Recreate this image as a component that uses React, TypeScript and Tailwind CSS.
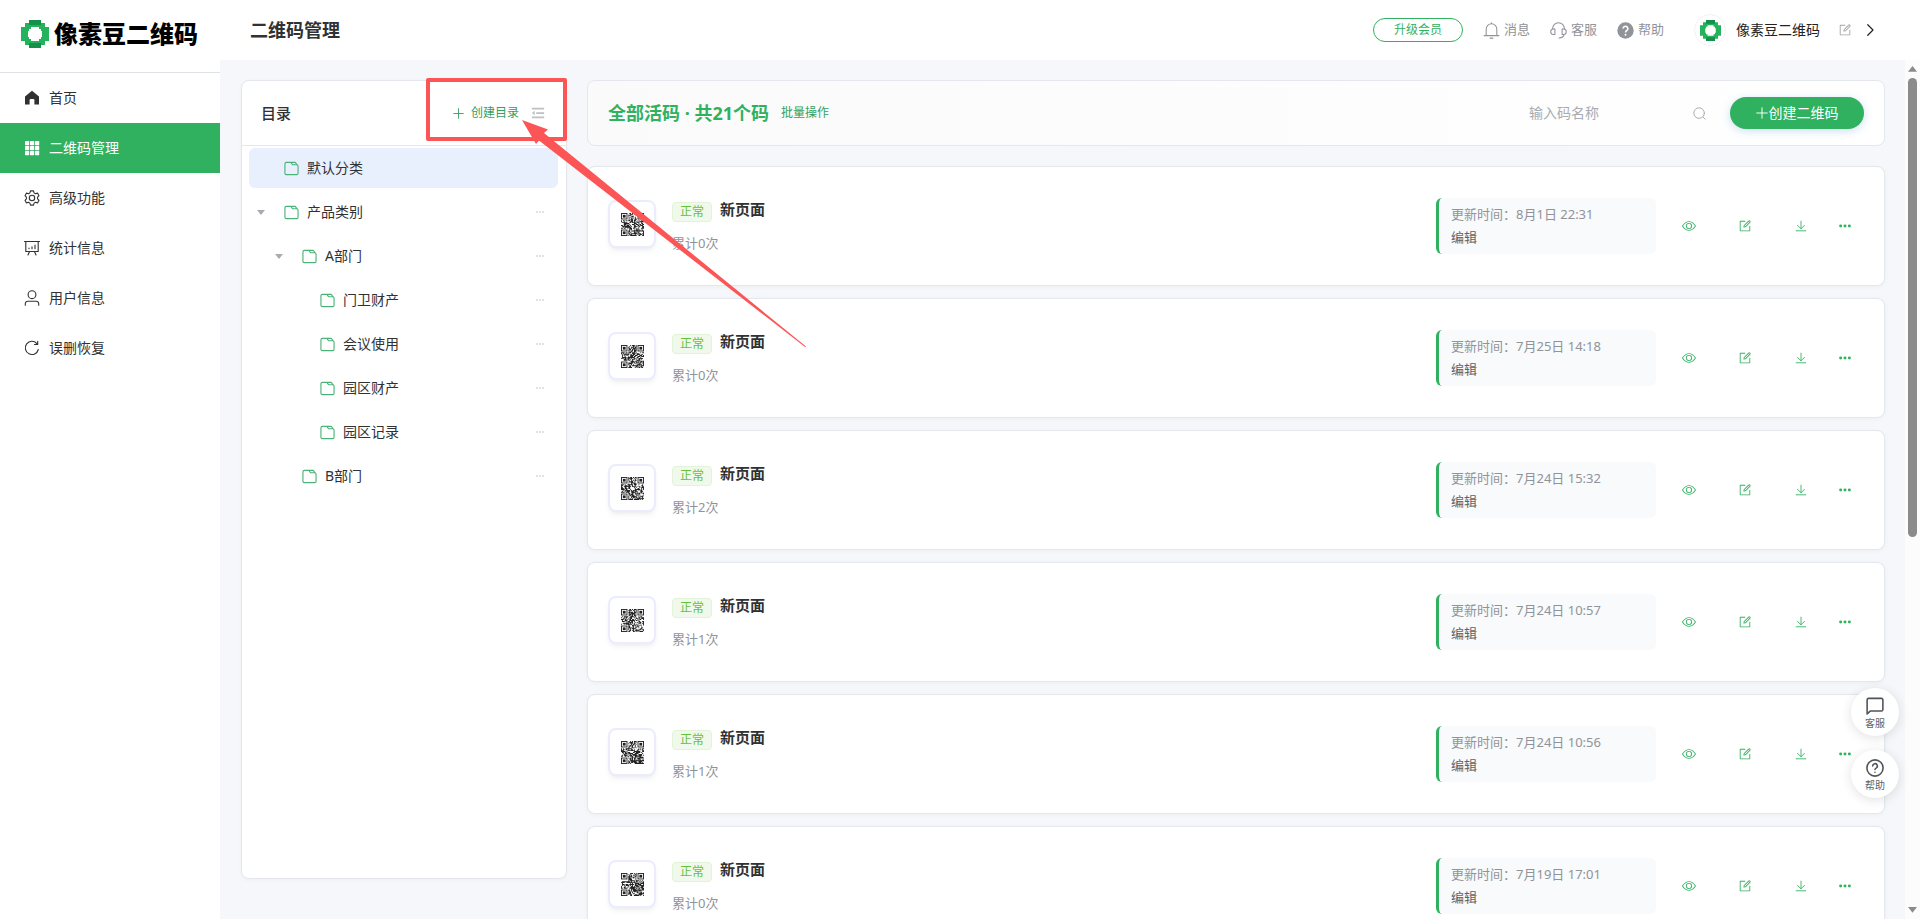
import { useState } from "react";
import type { ReactNode } from "react";
import clsx from "clsx";

type IconProps = { className?: string };

const MENU = [
  { id: "home", label: "首页", icon: HomeIcon },
  { id: "codes", label: "二维码管理", icon: GridIcon },
  { id: "advanced", label: "高级功能", icon: GearIcon },
  { id: "stats", label: "统计信息", icon: BoardIcon },
  { id: "user", label: "用户信息", icon: UserIcon },
  { id: "restore", label: "误删恢复", icon: RefreshIcon },
];

const FOLDERS = [
  { id: "default", name: "默认分类", indent: "pl-1", open: false, more: false },
  { id: "product", name: "产品类别", indent: "pl-1", open: true, more: true },
  { id: "dept-a", name: "A部门", indent: "pl-[22px]", open: true, more: true },
  { id: "guard", name: "门卫财产", indent: "pl-10", open: false, more: true },
  { id: "meeting", name: "会议使用", indent: "pl-10", open: false, more: true },
  { id: "park-asset", name: "园区财产", indent: "pl-10", open: false, more: true },
  { id: "park-log", name: "园区记录", indent: "pl-10", open: false, more: true },
  { id: "dept-b", name: "B部门", indent: "pl-[22px]", open: false, more: true },
];

const CODES = [
  { id: 11, title: "新页面", scans: 0, updated: "8月1日 22:31" },
  { id: 23, title: "新页面", scans: 0, updated: "7月25日 14:18" },
  { id: 37, title: "新页面", scans: 2, updated: "7月24日 15:32" },
  { id: 41, title: "新页面", scans: 1, updated: "7月24日 10:57" },
  { id: 59, title: "新页面", scans: 1, updated: "7月24日 10:56" },
  { id: 67, title: "新页面", scans: 0, updated: "7月19日 17:01" },
];

/* ---------- icons ---------- */

function Line({ className, children, width = 1.2 }: IconProps & { children: ReactNode; width?: number }) {
  return (
    <svg
      viewBox="0 0 16 16"
      className={className}
      fill="none"
      stroke="currentColor"
      strokeWidth={width}
      strokeLinecap="round"
      strokeLinejoin="round"
      aria-hidden="true"
    >
      {children}
    </svg>
  );
}

function HomeIcon({ className }: IconProps) {
  return (
    <svg viewBox="0 0 16 16" className={className} fill="currentColor" aria-hidden="true">
      <path d="M8 .8 15 6.6V14.5h-4.6V10a1 1 0 0 0-1-1H6.600a1 1 0 0 0-1 1v4.500H1V6.600z" />
    </svg>
  );
}

function GridIcon({ className }: IconProps) {
  return (
    <svg viewBox="0 0 16 16" className={className} fill="currentColor" aria-hidden="true">
      {[1, 6, 11].map((y) => [1, 6, 11].map((x) => <rect key={`${x}-${y}`} x={x} y={y} width="4.2" height="4.2" rx=".4" />))}
    </svg>
  );
}

function GearIcon({ className }: IconProps) {
  return (
    <Line className={className} width={1.1}>
      <circle cx="8" cy="8" r="2.700" />
      <path d="M6.500.9h3l.6 2 1.300.8 2.100-.6 1.500 2.600L13.600 7.200v1.600L15 10.300l-1.500 2.600-2.100-.6-1.300.8-.6 2h-3l-.6-2-1.300-.8-2.100.6L1 10.300l1.400-1.500V7.200L1 5.700l1.500-2.600 2.100.6 1.300-.8z" />
    </Line>
  );
}

function BoardIcon({ className }: IconProps) {
  return (
    <Line className={className} width={1.1}>
      <path d="M.5 1.500h15M1.800 1.500v10h12.400v-10M5.500 11.500 4 15M10.500 11.500 12 15M5 8v.8M8 6.800v2M11 5v3.800" />
    </Line>
  );
}

function UserIcon({ className }: IconProps) {
  return (
    <Line className={className} width={1.1}>
      <circle cx="8" cy="4.700" r="3.900" />
      <path d="M1.300 15.300v-1.600a2.500 2.500 0 0 1 2.500-2.500h8.400a2.500 2.500 0 0 1 2.500 2.500v1.600" />
    </Line>
  );
}

function RefreshIcon({ className }: IconProps) {
  return (
    <Line className={className} width={1.1}>
      <path d="M14.300 9.500A6.600 6.600 0 1 1 12.900 3.600M13.700 1.300v3.200h-3.200" />
    </Line>
  );
}

function FolderIcon({ className }: IconProps) {
  return (
    <Line className={className}>
      <path d="M1 3A1.500 1.500 0 0 1 2.500 1.500h5l1.500 2.500h4.500A1.500 1.500 0 0 1 15 5.500v7.500a1.500 1.500 0 0 1-1.500 1.500h-11A1.500 1.500 0 0 1 1 13zM7.500 1.500H12L14 4" />
    </Line>
  );
}

function BellIcon({ className }: IconProps) {
  return (
    <Line className={className} width={1}>
      <path d="M8 .7v1M3 12.800V6.700a5 5 0 0 1 10 0v6.100M1 12.800h14M6.700 15.200h2.600" />
    </Line>
  );
}

function HeadsetIcon({ className }: IconProps) {
  return (
    <Line className={className} width={1}>
      <path d="M2.500 6.800V6.200a5.500 5.500 0 0 1 11 0v.6M4.600 6.600v5.200H3.300a2.600 2.600 0 0 1 0-5.200zM11.400 6.600v5.200h1.300a2.600 2.600 0 0 0 0-5.200zM13.300 11.700c-.3 2-2 3.200-4.800 3.300" />
    </Line>
  );
}

function HelpFilledIcon({ className }: IconProps) {
  return (
    <svg viewBox="0 0 16 16" className={className} aria-hidden="true">
      <circle cx="8" cy="8" r="7.700" fill="currentColor" />
      <path d="M5.800 6.200a2.200 2.200 0 1 1 3.600 1.700C8.500 8.500 8 8.800 8 9.800" fill="none" stroke="#fff" strokeWidth="1.500" />
      <circle cx="8" cy="12" r=".95" fill="#fff" />
    </svg>
  );
}

function EditIcon({ className }: IconProps) {
  return (
    <svg viewBox="0 0 1024 1024" className={className} fill="currentColor" aria-hidden="true">
      <path d="M832 512a32 32 0 1 1 64 0v352a32 32 0 0 1-32 32H160a32 32 0 0 1-32-32V160a32 32 0 0 1 32-32h352a32 32 0 0 1 0 64H192v640h640z" />
      <path d="m469.952 554.240 52.800-7.552L847.104 222.400a32 32 0 1 0-45.248-45.248L477.440 501.440l-7.552 52.800zm422.400-422.400a96 96 0 0 1 0 135.808l-331.840 331.840a32 32 0 0 1-18.112 9.088L436.800 623.680a32 32 0 0 1-36.224-36.224l15.104-105.600a32 32 0 0 1 9.024-18.112l331.904-331.840a96 96 0 0 1 135.744 0z" />
    </svg>
  );
}

function EyeIcon({ className }: IconProps) {
  return (
    <svg viewBox="0 0 1024 1024" className={className} fill="currentColor" aria-hidden="true">
      <path d="M512 160c320 0 512 352 512 352S832 864 512 864 0 512 0 512s192-352 512-352m0 64c-225.280 0-384.128 208.064-436.800 288 52.608 79.872 211.456 288 436.800 288 225.280 0 384.128-208.064 436.800-288-52.608-79.872-211.456-288-436.800-288m0 64a224 224 0 1 1 0 448 224 224 0 0 1 0-448m0 64a160.192 160.192 0 0 0-160 160c0 88.192 71.744 160 160 160s160-71.808 160-160-71.744-160-160-160" />
    </svg>
  );
}

function DownloadIcon({ className }: IconProps) {
  return (
    <Line className={className} width={1}>
      <path d="M8 2.500v8.500M4 7.200l4 4 4-4M2.500 13.500h11" />
    </Line>
  );
}

function MoreIcon({ className }: IconProps) {
  return (
    <svg viewBox="0 0 16 16" className={className} fill="currentColor" aria-hidden="true">
      <circle cx="3" cy="8" r="1.700" />
      <circle cx="8" cy="8" r="1.700" />
      <circle cx="13" cy="8" r="1.700" />
    </svg>
  );
}

function PlusIcon({ className }: IconProps) {
  return (
    <Line className={className} width={1.3}>
      <path d="M8 1v14M1 8h14" />
    </Line>
  );
}

function CollapseIcon({ className }: IconProps) {
  return (
    <svg viewBox="0 0 16 16" className={className} fill="currentColor" aria-hidden="true">
      <path d="M1 2h14v2H1zM6 7h9v2H6zM1 12h14v2H1zM1 8l3.200-2.500v5z" />
    </svg>
  );
}

// Bean logo: pixel ring, darker caps on top and bottom
function Logo({ className }: IconProps) {
  return (
    <svg viewBox="0 0 28 28" className={className} aria-hidden="true">
      <path d="M8 0h12v3h4v4h4v14h-4v4h-4v3H8v-3H4v-4H0V7h4V3h4z" fill="#24b35c" />
      <path d="M8 0h12v5H8zM8 23h12v5H8z" fill="#14904a" />
      <path d="M10 7h8v2h2v2h1v6h-1v2h-2v2h-8v-2H8v-2H7v-6h1V9h2z" fill="#fff" />
    </svg>
  );
}

const QR_SIZE = 25;

function isFinder(x: number, y: number) {
  return (x < 8 && y < 8) || (x >= QR_SIZE - 8 && y < 8) || (x < 8 && y >= QR_SIZE - 8);
}

function QrCode({ seed }: { seed: number }) {
  let state = seed * 7919;
  let path = "";
  for (let y = 0; y < QR_SIZE; y++) {
    for (let x = 0; x < QR_SIZE; x++) {
      state = (state * 1103515245 + 12345) % 2147483648;
      if (!isFinder(x, y) && state / 2147483648 > 0.4) path += `M${x} ${y}h1v1h-1z`;
    }
  }
  return (
    <svg viewBox="0 0 25 25" className="size-[23px]" role="img" aria-label="二维码">
      <path d={path} fill="#222" />
      {[[0, 0], [18, 0], [0, 18]].map(([x, y]) => (
        <g key={`${x}-${y}`}>
          <rect x={x + 0.5} y={y + 0.5} width="6" height="6" fill="none" stroke="#222" />
          <rect x={x + 2} y={y + 2} width="3" height="3" fill="#222" />
        </g>
      ))}
    </svg>
  );
}

/* ---------- layout ---------- */

function Sidebar() {
  const [active, setActive] = useState("codes");
  return (
    <aside className="w-[220px] shrink-0 bg-white">
      <div className="flex h-[73px] items-center gap-[5px] border-b border-[#dfe1e6] pb-1 pl-[21px]">
        <Logo className="size-7 shrink-0" />
        <span className="text-2xl font-black whitespace-nowrap text-black">像素豆二维码</span>
      </div>
      <nav>
        {MENU.map(({ id, label, icon: Icon }) => (
          <a
            key={id}
            href="#"
            onClick={() => setActive(id)}
            className={clsx(
              "flex h-[50px] items-center gap-[9px] pl-6 text-sm",
              active === id ? "bg-[#30b15f] text-white" : "text-[#303133]"
            )}
          >
            <Icon className="size-4" />
            {label}
          </a>
        ))}
      </nav>
    </aside>
  );
}

function TopBar() {
  return (
    <header className="flex h-[60px] shrink-0 items-center bg-white pr-[44px] pl-[30px]">
      <h1 className="mr-auto text-lg font-bold text-[#303133]">二维码管理</h1>
      <button className="h-6 w-[90px] rounded-full border border-[#30b15f] text-xs text-[#30b15f]">升级会员</button>
      <div className="ml-5 flex gap-5 text-[13px] text-[#909399]">
        <button className="flex items-center gap-1">
          <BellIcon className="size-[17px]" />
          消息
        </button>
        <button className="flex items-center gap-1">
          <HeadsetIcon className="size-[17px]" />
          客服
        </button>
        <button className="flex items-center gap-1">
          <HelpFilledIcon className="size-[17px]" />
          帮助
        </button>
      </div>
      <div className="ml-[30px] flex items-center">
        <span className="flex size-8 items-center justify-center rounded-full border border-[#f2f2f2]">
          <Logo className="size-[21px]" />
        </span>
        <span className="ml-[10px] text-sm text-[#222]">像素豆二维码</span>
        <button aria-label="编辑资料" className="ml-[18px] text-[#a0a3a8]">
          <EditIcon className="size-[14px]" />
        </button>
        <button aria-label="展开" className="ml-3 text-[#222]">
          <Line className="size-3" width={1.6}>
            <path d="m5 1 7 7-7 7" />
          </Line>
        </button>
      </div>
    </header>
  );
}

function FolderPanel() {
  const [selected, setSelected] = useState("default");
  return (
    <section className="h-[calc(100vh-120px)] w-[326px] shrink-0 rounded-lg border border-[#e4e7ed] bg-white shadow-[0_1px_4px_rgba(0,0,0,0.04)]">
      <div className="flex h-[65px] items-center border-b border-[#e4e7ed] pr-[21px] pl-[19px]">
        <h2 className="mr-auto text-[15px] font-medium text-[#303133]">目录</h2>
        <button className="flex items-center gap-[7px] text-xs text-[#30a15f]">
          <PlusIcon className="size-[11px]" />
          创建目录
        </button>
        <button aria-label="收起目录" className="ml-3 text-[#c0c0c4]">
          <CollapseIcon className="size-[14px]" />
        </button>
      </div>
      <ul className="flex flex-col gap-1 pt-[2px] pr-2 pl-[7px]">
        {FOLDERS.map((folder) => (
          <li
            key={folder.id}
            className={clsx(
              "flex h-10 items-center rounded-md pr-[14px]",
              folder.indent,
              selected === folder.id && "bg-[#e8f0fe]"
            )}
          >
            <span className="flex w-[31px] shrink-0 pl-1">
              {folder.open && (
                <svg viewBox="0 0 8 5" className="w-2" aria-hidden="true">
                  <path d="M0 0h8L4 5z" fill="#a8abb2" />
                </svg>
              )}
            </span>
            <button
              onClick={() => setSelected(folder.id)}
              className="flex flex-1 items-center gap-2 text-left text-sm text-[#303133]"
            >
              <FolderIcon className="size-[15px] text-[#4bb277]" />
              {folder.name}
            </button>
            {folder.more && (
              <button aria-label={`${folder.name} 更多`} className="text-[#c4c6cb]">
                <svg viewBox="0 0 8 2" className="w-2" fill="currentColor" aria-hidden="true">
                  <path d="M0 .4h2v1H0zM3 .4h2v1H3zM6 .4h2v1H6z" />
                </svg>
              </button>
            )}
          </li>
        ))}
      </ul>
    </section>
  );
}

function Toolbar() {
  return (
    <div className="flex h-[66px] shrink-0 items-center rounded-lg border border-[#e4e7ed] bg-linear-to-r from-[#fafafa] to-white px-5">
      <h2 className="text-lg font-bold text-[#30b15f]">全部活码 · 共21个码</h2>
      <button className="ml-3 text-xs text-[#30a15f]">批量操作</button>
      <label className="mr-6 ml-auto flex w-[177px] items-center">
        <input
          type="text"
          aria-label="输入码名称"
          placeholder="输入码名称"
          className="w-full min-w-0 text-sm outline-none placeholder:text-[#a8abb2]"
        />
        <Line className="size-[13px] shrink-0 text-[#a8abb2]">
          <circle cx="7.500" cy="7.500" r="6.500" />
          <path d="m12.500 12.500 2.500 2.500" />
        </Line>
      </label>
      <button className="flex h-8 w-[134px] items-center justify-center gap-px rounded-full bg-[#30b15f] text-sm text-white shadow-[0_2px_8px_rgba(64,128,200,0.25)]">
        <PlusIcon className="size-3" />
        创建二维码
      </button>
    </div>
  );
}

function CodeCard({ code }: { code: (typeof CODES)[number] }) {
  return (
    <article className="flex h-[120px] shrink-0 items-center rounded-lg border border-[#e4e7ed] bg-white px-5 shadow-[0_1px_4px_rgba(0,0,0,0.04)]">
      <div className="mb-1 flex size-12 items-center justify-center rounded-lg border-2 border-[#ebecfd] bg-white shadow-md shadow-black/5">
        <QrCode seed={code.id} />
      </div>
      <div className="ml-4 pt-[3px]">
        <div className="flex gap-2">
          <span className="flex h-5 w-10 items-center justify-center rounded border border-[#e1f3d8] bg-[#f0f9eb] text-xs text-[#67c23a]">
            正常
          </span>
          <h3 className="text-[15px] leading-[14px] font-bold text-[#303133]">{code.title}</h3>
        </div>
        <p className="mt-[11px] text-[13px] leading-5 text-[#909399]">累计{code.scans}次</p>
      </div>
      <div className="ml-auto flex h-14 w-[220px] flex-col justify-center rounded-md border-l-3 border-[#30b15f] bg-[#f8fafb] pl-3 text-[13px] leading-[23px]">
        <p className="text-[#909399]">更新时间：{code.updated}</p>
        <p className="text-[#606266]">编辑</p>
      </div>
      <div className="ml-[26px] flex items-center text-[#30b15f]">
        <button aria-label="查看" className="mr-[42px]">
          <EyeIcon className="size-[14px]" />
        </button>
        <button aria-label="编辑" className="mr-[42px]">
          <EditIcon className="size-[14px]" />
        </button>
        <button aria-label="下载" className="mr-[30px]">
          <DownloadIcon className="size-[14px]" />
        </button>
        <button aria-label="更多" className="mr-3">
          <MoreIcon className="size-[14px]" />
        </button>
      </div>
    </article>
  );
}

function ScrollRail() {
  return (
    <div className="flex w-[15px] shrink-0 flex-col items-center bg-[#fcfcfc] py-[6px] text-[#8b8b8b]">
      <svg viewBox="0 0 8 5" className="w-[9px]" fill="currentColor" aria-hidden="true">
        <path d="M4 0 8 5H0z" />
      </svg>
      <div className="mt-[6px] h-[459px] w-[9px] rounded-full bg-[#8b8b8b]" />
      <svg viewBox="0 0 8 5" className="mt-auto w-[9px]" fill="currentColor" aria-hidden="true">
        <path d="M0 0h8L4 5z" />
      </svg>
    </div>
  );
}

function FloatingHelp() {
  const style =
    "flex size-12 flex-col items-center justify-center rounded-full bg-white pt-[2px] text-[10px] leading-3 text-[#606266] shadow-[0_2px_12px_rgba(0,0,0,0.12)]";
  return (
    <div className="absolute right-[21px] bottom-[121px] flex flex-col gap-[14px]">
      <button className={style}>
        <Line className="mb-[2px] size-[18px] text-[#505358]" width={1.4}>
          <path d="M2.200 1.200h11.600a1.200 1.200 0 0 1 1.200 1.200v8.800a1.200 1.200 0 0 1-1.200 1.200H4L1 15V2.400a1.200 1.200 0 0 1 1.200-1.200z" />
        </Line>
        客服
      </button>
      <button className={style}>
        <Line className="mb-[2px] size-[18px] text-[#505358]" width={1.4}>
          <circle cx="8" cy="8" r="7.200" />
          <path d="M5.900 6.200a2.100 2.100 0 1 1 3.100 1.900C8.200 8.500 8 8.800 8 9.400M8 11.700v.1" />
        </Line>
        帮助
      </button>
    </div>
  );
}

// Callout drawn above the page, pointing at the create-folder button
function Callout() {
  return (
    <>
      <div className="pointer-events-none absolute top-[78px] left-[426px] h-[63px] w-[141px] rounded-xs border-4 border-[#fb5556]" />
      <svg
        viewBox="0 0 286 228"
        className="pointer-events-none absolute top-[120px] left-[522px] h-[228px] w-[286px]"
        fill="#fb5556"
        aria-hidden="true"
      >
        <path d="M0 0 26 9.500 22 13 284 226.500 283 227 17 20.500 14 24z" />
      </svg>
    </>
  );
}

export default function App() {
  return (
    <div className="relative flex h-screen overflow-hidden bg-[#f5f7fa] font-['Noto_Sans','Noto_Sans_CJK_SC',sans-serif]">
      <Sidebar />
      <div className="flex min-w-0 flex-1 flex-col">
        <TopBar />
        <div className="flex min-h-0 flex-1">
          <main className="flex min-w-0 flex-1 gap-5 overflow-hidden pt-5 pr-5 pl-[21px]">
            <FolderPanel />
            <div className="flex min-w-0 flex-1 flex-col gap-5">
              <Toolbar />
              <div className="flex flex-col gap-3">
                {CODES.map((code) => (
                  <CodeCard key={code.id} code={code} />
                ))}
              </div>
            </div>
          </main>
          <ScrollRail />
        </div>
      </div>
      <FloatingHelp />
      <Callout />
    </div>
  );
}
